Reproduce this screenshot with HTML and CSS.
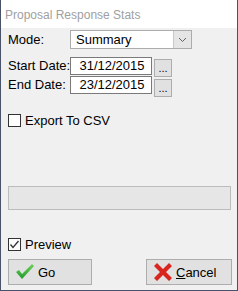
FILE: index.html
```html
<!DOCTYPE html>
<html lang="en">

<head>
  <meta charset="UTF-8" />
  <title>Proposal Response Stats</title>
  <link rel="stylesheet" href="styles.css">
</head>

<body>
  <div class="window">

    <div class="title-bar">Proposal Response Stats</div>

    <div class="form">

      <div class="row row-mode">
        <label class="label">Mode:</label>
        <div class="combo">
          <span class="combo-text">Summary</span>
          <span class="combo-btn">
            <svg width="9" height="6" viewBox="0 0 9 6"><polyline points="1,1 4.5,4.5 8,1" fill="none" stroke="#606060" stroke-width="1" /></svg>
          </span>
        </div>
      </div>

      <div class="row row-start">
        <label class="label">Start Date:</label>
        <div class="date-box">31/12/2015</div>
        <button class="dots">...</button>
      </div>

      <div class="row row-end">
        <label class="label">End Date:</label>
        <div class="date-box">23/12/2015</div>
        <button class="dots dots-low">...</button>
      </div>

      <div class="check row-export">
        <span class="check-box"></span>
        <span class="check-label">Export To CSV</span>
      </div>

      <div class="progress"></div>

      <div class="check row-preview">
        <span class="check-box">
          <svg width="11" height="11" viewBox="0 0 11 11"><polyline points="1.5,5.5 4,8.5 9.5,2" fill="none" stroke="#333" stroke-width="1.3" /></svg>
        </span>
        <span class="check-label">Preview</span>
      </div>

      <div class="buttons">
        <button class="btn btn-go">
          <svg width="20" height="18" viewBox="0 0 20 18">
            <defs>
              <linearGradient id="g" x1="0" y1="0" x2="0" y2="1">
                <stop offset="0" stop-color="#6fd25a" />
                <stop offset="1" stop-color="#1f9a2c" />
              </linearGradient>
            </defs>
            <polygon points="1,9 4,7 7,11 17,1 19,3 7,16" fill="url(#g)" />
          </svg>
          <span>Go</span>
        </button>
        <button class="btn btn-cancel">
          <svg width="20" height="18" viewBox="0 0 20 18">
            <polygon points="1,3 4,0 10,6 16,0 19,3 13,9 19,15 16,18 10,12 4,18 1,15 7,9" fill="#d8261e" />
          </svg>
          <span><u>C</u>ancel</span>
        </button>
      </div>

    </div>

  </div>
</body>

</html>
```

FILE: styles.css
```css
* {
  box-sizing: border-box;
}

html,
body {
  margin: 0;
  padding: 0;
}

body {
  font-family: "Liberation Sans", Arial, sans-serif;
  font-size: 13px;
  color: #000;
}

.window {
  width: 238px;
  height: 291px;
  border: 1px solid #4a5268;
  border-top: none;
  background: #f0f0f0;
  display: flex;
  flex-direction: column;
}

.title-bar {
  height: 28px;
  flex-shrink: 0;
  background: #fff;
  color: #a0a0a0;
  font-size: 12px;
  padding: 8px 0 0 4px;
}

.form {
  flex: 1;
  display: flex;
  flex-direction: column;
  padding: 0 0 0 6px;
}

.row {
  display: flex;
  align-items: flex-start;
}

.label {
  width: 63px;
  flex-shrink: 0;
  white-space: nowrap;
  padding-left: 1px;
  line-height: 18px;
}

.row-mode {
  margin-top: 2px;
}

.row-mode .label {
  padding-top: 1px;
}

.combo {
  width: 122px;
  height: 19px;
  border: 1px solid #acacac;
  background: #fff;
  display: flex;
}

.combo-text {
  flex: 1;
  padding-left: 5px;
  line-height: 17px;
}

.combo-btn {
  width: 18px;
  background: #e5e5e5;
  border-left: 1px solid #c8c8c8;
  display: flex;
  align-items: center;
  justify-content: center;
}

.row-start {
  margin-top: 8px;
}

.row-end {
  margin-top: -1px;
}

.date-box {
  width: 82px;
  flex-shrink: 0;
  height: 18px;
  border: 1px solid #7a7a7a;
  background: #fff;
  text-align: center;
  line-height: 16px;
  padding-left: 2px;
}

.dots {
  width: 18px;
  height: 18px;
  flex-shrink: 0;
  margin: 2px 0 0 2px;
  padding: 0 0 3px;
  border: 1px solid #adadad;
  background: #e1e1e1;
  font-family: inherit;
  font-size: 11px;
  line-height: 10px;
  display: flex;
  align-items: flex-end;
  justify-content: center;
}

.dots-low {
  margin-top: 3px;
}

.check {
  display: flex;
  align-items: center;
  height: 14px;
}

.check-box {
  width: 13px;
  height: 13px;
  border: 1px solid #333;
  background: #fff;
  margin-left: 1px;
  display: flex;
  align-items: center;
  justify-content: center;
}

.check-label {
  margin-left: 4px;
}

.row-export {
  margin-top: 16px;
}

.progress {
  width: 223px;
  height: 24px;
  flex-shrink: 0;
  margin: 59px 0 0 1px;
  border: 1px solid #bcbcbc;
  background: #e6e6e6;
}

.row-preview {
  margin-top: 27px;
}

.buttons {
  display: flex;
  justify-content: space-between;
  margin-top: 8px;
  padding: 0 5px 0 1px;
}

.btn {
  height: 26px;
  border: 1px solid #adadad;
  background: #e1e1e1;
  font-family: inherit;
  font-size: 13px;
  color: #000;
  display: flex;
  align-items: center;
  padding: 0 0 0 6px;
}

.btn span {
  margin-left: 3px;
}

.btn-go {
  width: 84px;
}

.btn-cancel {
  width: 86px;
}
```
